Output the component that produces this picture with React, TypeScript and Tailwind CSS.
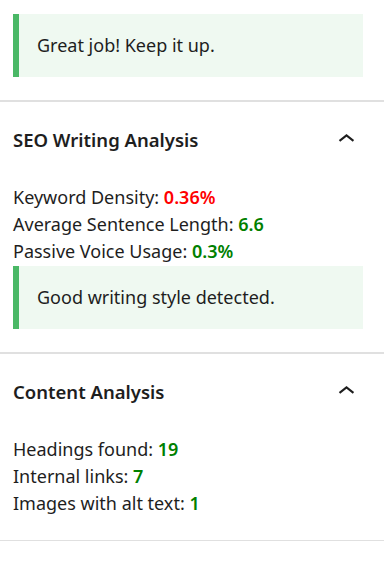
import React from 'react';

const Good = ({ children }: { children: React.ReactNode }) => (
  <span className="font-semibold text-[#008000]">{children}</span>
);

const Bad = ({ children }: { children: React.ReactNode }) => (
  <span className="font-semibold text-[#ff0000]">{children}</span>
);

const Notice = ({ text }: { text: string }) => (
  <div className="border-l-[6px] border-[#4ab866] bg-[#eff9f1] py-[18px] pl-[18px] pr-4 leading-[27px] text-[#1e1e1e]">
    {text}
  </div>
);

const ChevronUp = () => (
  <svg viewBox="0 0 24 24" className="h-[33px] w-[33px]" fill="#1e1e1e">
    <path d="M6.5 12.4L12 8l5.5 4.4-.9 1.2L12 10l-4.6 3.6-1-1.2z" />
  </svg>
);

const Panel = ({ title, children }: { title: string; children: React.ReactNode }) => (
  <div className="border-y border-[#e0e0e0] px-[13px] pb-[23px] pt-[24px]">
    <div className="flex items-center justify-between">
      <h2 className="text-[18.5px] font-semibold leading-[27px]">{title}</h2>
      <div className="-my-2 mr-[8px]">
        <ChevronUp />
      </div>
    </div>
    <div className="mt-[31px]">{children}</div>
  </div>
);

export default function App() {
  const font = { fontFamily: '"Noto Sans", "Open Sans", sans-serif' };
  return (
    <div className="min-h-[567px] w-[384px] bg-white text-[18px] leading-[27px] text-[#1e1e1e]" style={font}>
      <div className="border-b border-[#e0e0e0] px-[13px] pb-[23px] pt-[14px]">
        <div className="mr-[8px]">
          <Notice text="Great job! Keep it up." />
        </div>
      </div>

      <Panel title="SEO Writing Analysis">
        <p>Keyword Density: <Bad>0.36%</Bad></p>
        <p>Average Sentence Length: <Good>6.6</Good></p>
        <p>Passive Voice Usage: <Good>0.3%</Good></p>
        <div className="mt-[1px] mr-[8px]">
          <Notice text="Good writing style detected." />
        </div>
      </Panel>

      <Panel title="Content Analysis">
        <p>Headings found: <Good>19</Good></p>
        <p>Internal links: <Good>7</Good></p>
        <p>Images with alt text: <Good>1</Good></p>
      </Panel>
    </div>
  );
}
